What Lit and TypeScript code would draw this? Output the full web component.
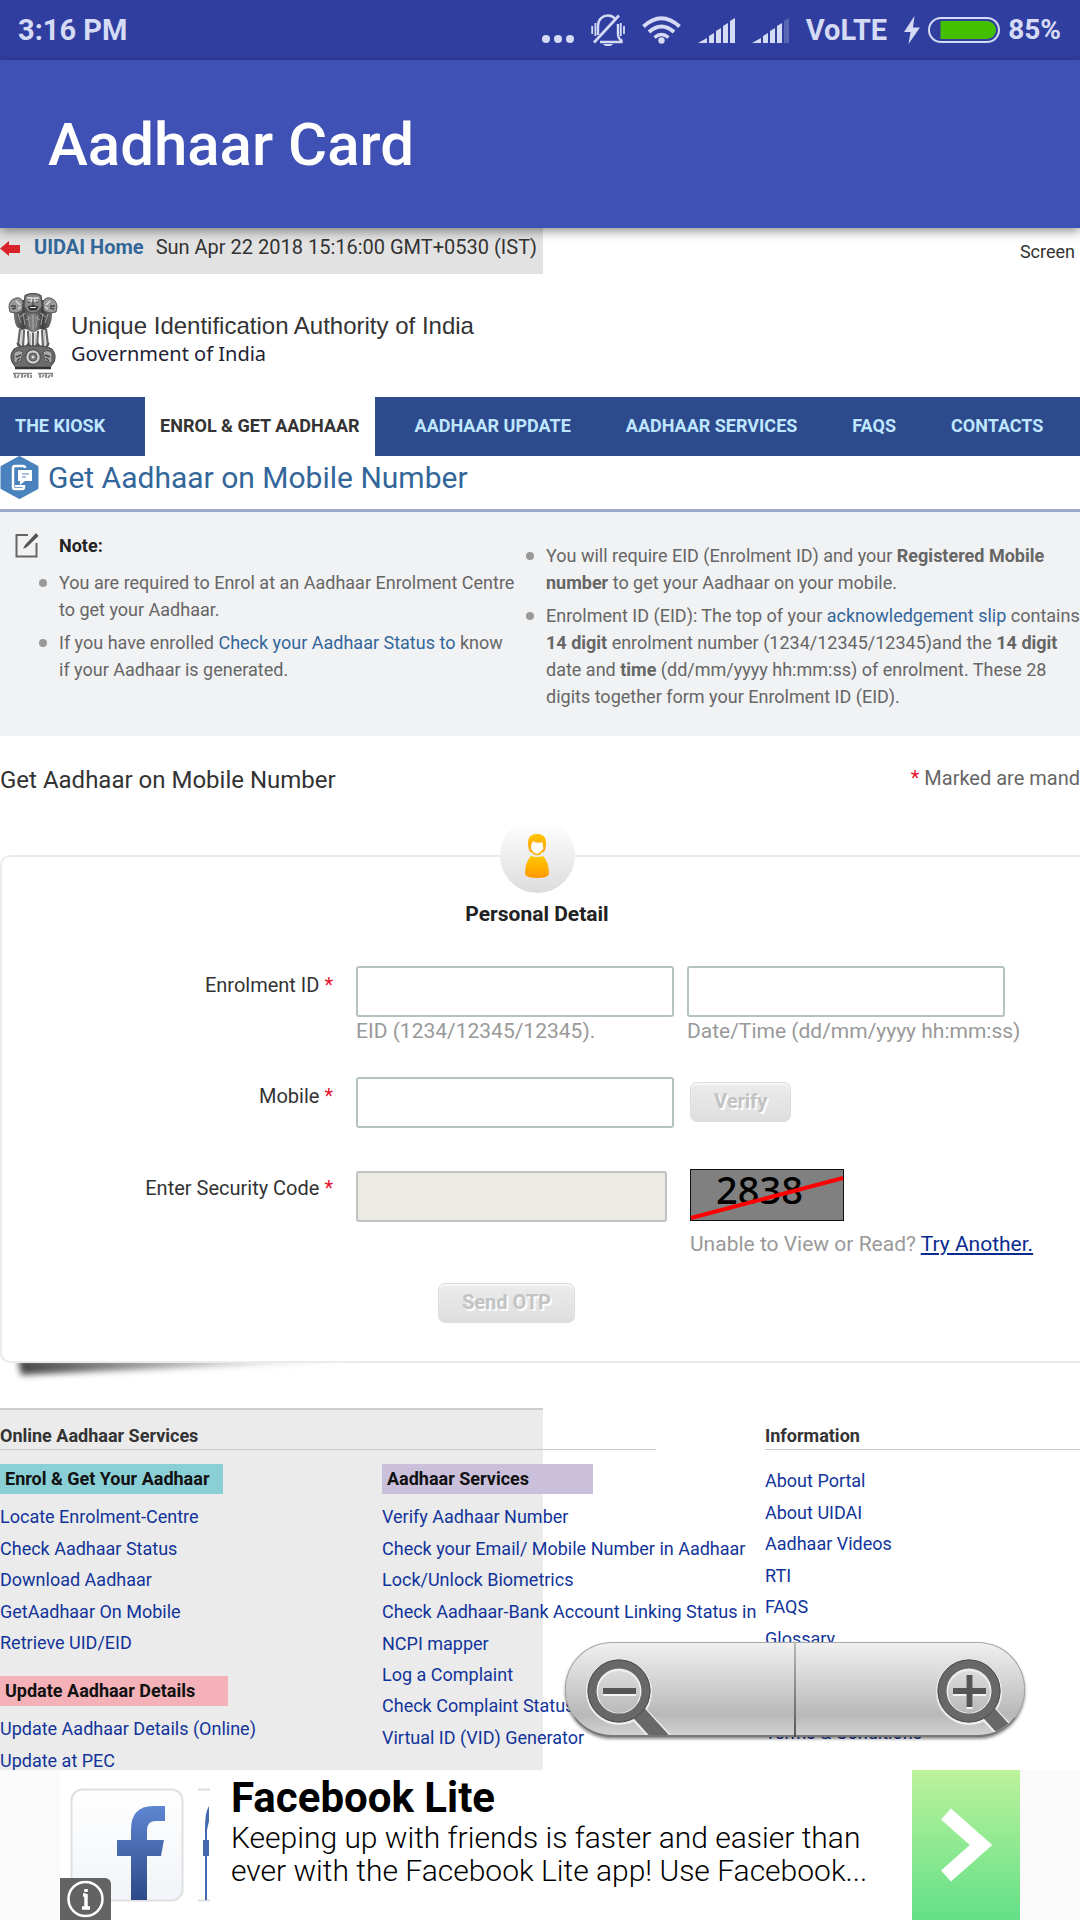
import { LitElement, html, svg, css } from "lit";
import { customElement } from "lit/decorators.js";

const bars = (lit: number) => svg`
  ${[0, 1, 2, 3, 4].map((i) => {
    const x = [0, 11, 18, 25, 32][i];
    const w = i === 0 ? 9 : 5;
    const top = [20, 15, 10, 5, 0][i];
    return svg`<path opacity=${i < lit ? 1 : 0.25} d="M${x} ${i === 0 ? 25 : top + 3} L${x + w} ${top} V25 H${x} Z" />`;
  })}`;

@customElement("status-bar")
class StatusBar extends LitElement {
  static styles = css`
    :host { display: flex; align-items: center; justify-content: space-between; height: 60px; padding: 0 19px 0 18px;
      background: #303f9f; color: #d5daf5; font: 700 29px/60px Roboto, sans-serif; }
    .icons { display: flex; align-items: center; gap: 17px; }
    .power { display: flex; align-items: center; gap: 8px; }
    .level { font-size: 28px; }
    svg { display: block; fill: currentColor; }
  `;
  render() {
    return html`
      <span>3:16 PM</span>
      <div class="icons">
        <svg width="32" height="32" viewBox="0 0 32 32"><circle cx="4" cy="25" r="4" /><circle cx="16" cy="25" r="4" /><circle cx="28" cy="25" r="4" /></svg>
        <svg width="34" height="32" viewBox="0 0 34 32">
          <path d="M7 21V12C7 5 12 1.500 17 1.500C20 1.500 22 2.500 24 4.500M27 10V20C27 23 28 25 30.500 26.500V28H9" fill="none" stroke="currentColor" stroke-width="2.400" />
          <path d="M3 28.500L28 1.500" stroke="currentColor" stroke-width="2.600" />
          <path d="M12 30H22Q21 32 17 32Q13 32 12 30Z" />
          <path d="M1.200 12V20M4.400 9V22M29.800 9V22M33 12V20" stroke="currentColor" stroke-width="1.800" />
        </svg>
        <svg width="39" height="28" viewBox="0 0 39 28">
          <g fill="none" stroke="currentColor" stroke-width="4"><path d="M1.500 10.500Q19.500 -6 37.500 10.500" /><path d="M7 16Q19.500 5 32 16" /><path d="M12.500 21.500Q19.500 15.500 26.500 21.500" stroke-width="3.500" /></g>
          <circle cx="19.500" cy="24.500" r="3.200" />
        </svg>
        <svg width="37" height="25" viewBox="0 0 37 25">${bars(5)}</svg>
        <svg width="37" height="25" viewBox="0 0 37 25">${bars(4)}</svg>
        <span>VoLTE</span>
        <div class="power">
          <svg width="16" height="28" viewBox="0 0 16 28"><path d="M10.500 0L0 16H6.500L4.500 28L16 11.500H9Z" /></svg>
          <svg width="72" height="26" viewBox="0 0 72 26"><rect x="1" y="1" width="70" height="24" rx="12" fill="none" stroke="currentColor" stroke-width="2" /><path d="M12.500 4H59A9 9 0 0 1 59 22H12.500Z" fill="#45c000" /></svg>
          <span class="level">85%</span>
        </div>
      </div>`;
  }
}

@customElement("national-emblem")
class NationalEmblem extends LitElement {
  static styles = css`:host, svg { display: block; }`;
  render() {
    return html`<svg width="50" height="87" viewBox="0 0 50 87" role="img" aria-label="State Emblem of India">
      <defs>
        <linearGradient id="stone" x1="0" x2="1"><stop offset="0" stop-color="#777" /><stop offset=".25" stop-color="#444" /><stop offset=".5" stop-color="#888" /><stop offset=".75" stop-color="#3c3c3c" /><stop offset="1" stop-color="#777" /></linearGradient>
      </defs>
      <path d="M6 14Q5 28 9 34L14 37L18 36L25 40L32 36L36 37L41 34Q45 27 44 14L36 7H14Z" fill="url(#stone)" />
      <path d="M1 14Q1 7 8 5Q14 4 15 10L14 18L8 20L2 19Z" fill="#999" stroke="#555" />
      <path d="M49 14Q49 7 42 5Q36 4 35 10L36 18L42 20L48 19Z" fill="#999" stroke="#555" />
      <path d="M3 13H8M4 16L8 15M42 13H47M42 15L46 16" stroke="#444" stroke-width="1.500" />
      <path d="M8 8L12 12M38 12L42 8M10 16L13 14M37 14L40 16" stroke="#ddd" stroke-width="1.500" />
      <path d="M17 3Q25 -2 33 3L34 13Q31 20 25 20Q19 20 16 13Z" fill="#888" stroke="#555" stroke-width="1.500" />
      <path d="M19 5H24V8H20M31 5H26V8H30" stroke="#e4e4e4" fill="none" stroke-width="1.500" />
      <path d="M25 6V12M20 9H22M28 9H30M20 14Q25 11 30 14L28 17H22Z" fill="#333" stroke="#333" />
      <path d="M22 14.500H28" stroke="#eee" />
      <path d="M10 21L13 30M15 20L17 32M20 22L22 34M25 22V36M30 22L28 34M35 20L33 32M40 21L37 30M12 24L18 20M38 24L32 20M18 27L23 24M32 27L27 24" stroke="#aaa" fill="none" stroke-width=".900" />
      <path d="M12 36L10 53M16 37L15 54M20 38L21 54M25 40V54M30 38L29 54M34 37L35 54M38 36L40 53" stroke="#666" stroke-width="2.200" />
      <path d="M14 37L13 52M22.500 40V52M27.500 40V52M36 37L37 52" stroke="#c4c4c4" stroke-width="1.500" />
      <path d="M9 50L13 54H18L20 51L23 54H27L30 51L32 54H38L41 50" fill="none" stroke="#555" stroke-width="2" />
      <path d="M6 56Q12 52 25 53Q38 52 44 56Q49 62 46 69Q43 73 42 75H8Q6 72 4 69Q1 62 6 56Z" fill="#6c6c6c" stroke="#444" />
      <path d="M6 60Q10 56 15 59L13 68L6 70ZM44 60Q40 56 35 59L37 68L44 70Z" fill="#aaa" stroke="#555" />
      <path d="M8 64L13 62M37 62L42 64M9 68L12 65M41 68L38 65" stroke="#444" stroke-width="1.500" />
      <circle cx="25" cy="64" r="7.500" fill="#ccc" stroke="#555" stroke-width="1.500" />
      <circle cx="25" cy="64" r="4" fill="#777" stroke="#555" /><circle cx="25" cy="64" r="1.500" fill="#ddd" />
      <path d="M7 75H43" stroke="#333" stroke-width="2.500" />
      <path d="M5 80.500H24M30 80.500H45" stroke="#888" stroke-width="1.500" />
      <path d="M7 81V85M11 82L9 85M14 81V85M18 82L16 84M20 81V85M23 82V85M32 81V85M36 82L34 84M38 81V85M42 82L40 85M44 81V84" stroke="#888" stroke-width="1.800" />
    </svg>`;
  }
}

@customElement("zoom-controls")
class ZoomControls extends LitElement {
  static styles = css`
    :host { display: flex; gap: 2px; width: 460px; height: 95px; border-radius: 47px; overflow: hidden;
      background: linear-gradient(#bbb, #555); box-shadow: 0 2px 3px rgba(0, 0, 0, 0.45); }
    button { display: flex; padding: 0; border: 1px solid #aaa; border-bottom: 2px solid #777; overflow: hidden;
      background: linear-gradient(#f0f0f0 0%, #d8d8d8 35%, #b8b8b8 78%, #d2d2d2 100%); }
    .out { flex: 1; border-radius: 47px 0 0 47px; padding-left: 20px; border-right: 0; }
    .in { flex: 0 0 229px; border-radius: 0 47px 47px 0; padding-right: 4px; justify-content: flex-end; border-left: 0; }
    svg { display: block; flex: none; }
  `;
  private glass(plus: boolean) {
    return html`<svg width="84" height="92" viewBox="0 0 84 92">
      <g fill="none">
        <path d="M52 70L82 102" stroke="#f2f2f2" stroke-width="18" />
        <circle cx="33" cy="49" r="27" stroke="#eee" stroke-width="12" />
        <path d="M51 68L80 100" stroke="#686868" stroke-width="15" />
        <circle cx="33" cy="48" r="27" stroke="#686868" stroke-width="9" />
        <circle cx="33" cy="48" r="31" stroke="#505050" stroke-width="1" />
        <path d=${plus ? "M17 50H50M33.500 34V66" : "M17 50H50"} stroke="#f4f4f4" stroke-width="6" />
        <path d=${plus ? "M17 48H50M33.500 32V64" : "M17 48H50"} stroke="#555" stroke-width="6" />
      </g>
    </svg>`;
  }
  render() {
    return html`<button class="out" aria-label="Zoom out">${this.glass(false)}</button><button class="in" aria-label="Zoom in">${this.glass(true)}</button>`;
  }
}

@customElement("ad-banner")
class AdBanner extends LitElement {
  static styles = css`
    :host { display: flex; flex: none; height: 150px; justify-content: center; background: #fafafa; font-family: Roboto, sans-serif; color: #000; }
    .inner { position: relative; display: flex; flex: 0 1 960px; background: #fff; }
    .art { display: flex; flex: none; gap: 14px; width: 171px; box-sizing: border-box; padding: 18px 0 0 10px; }
    .copy { flex: 1; padding-top: 5px; white-space: nowrap; }
    h2 { margin: 0; font-size: 42px; line-height: 46px; font-weight: 700; }
    p { margin: 0; font-family: "Roboto Light", Roboto, sans-serif; font-size: 30px; line-height: 33px; font-weight: 300; }
    .go { display: flex; align-items: center; justify-content: center; flex: none; width: 108px; background: linear-gradient(#bcf29c, #63e087); }
    .info { position: absolute; left: 0; bottom: 0; width: 51px; height: 42px; padding: 0; border: 0; border-top-right-radius: 6px; background: #636363; }
    svg { display: block; }
  `;
  render() {
    return html`<div class="inner">
      <div class="art">
        <svg width="114" height="114" viewBox="0 0 114 114" role="img" aria-label="Facebook">
          <defs>
            <linearGradient id="paper" x2="0" y2="1"><stop stop-color="#fff" /><stop offset="1" stop-color="#f1f4f8" /></linearGradient>
            <linearGradient id="blue" x2="0" y2="1"><stop stop-color="#5f86d2" /><stop offset="1" stop-color="#2c4987" /></linearGradient>
          </defs>
          <rect x="1.500" y="1.500" width="111" height="111" rx="11" fill="url(#paper)" stroke="#e0e0e0" stroke-width="2" />
          <path d="M61 112V68H47V52H61V42Q61 18 83 18H95V33H86Q77 33 77 42V52H94L91 68H77V112Z" fill="url(#blue)" />
        </svg>
        <svg width="12" height="114" viewBox="0 0 12 114">
          <path d="M0 1.500H12M0 112.500H12" stroke="#ddd" stroke-width="2" />
          <path d="M7 112V68H5V52H7V40Q7 24 11 18V33L9 42V52H11V68H9V112Z" fill="#4468b0" />
        </svg>
      </div>
      <div class="copy"><h2>Facebook Lite</h2><p>Keeping up with friends is faster and easier than<br />ever with the Facebook Lite app! Use Facebook...</p></div>
      <a class="go" href="#" aria-label="Open"><svg width="52" height="74" viewBox="0 0 52 74"><path d="M6 6L41 37L6 68" fill="none" stroke="#fff" stroke-width="15" /></svg></a>
      <button class="info" aria-label="Ad information"><svg width="51" height="42" viewBox="0 0 51 42"><circle cx="25.500" cy="21" r="17" fill="none" stroke="#fff" stroke-width="2.500" /><path d="M26 16V30M26 11V14M23 17H26M22 30H30" stroke="#fff" stroke-width="3.500" /></svg></button>
    </div>`;
  }
}

const NAV = ["The Kiosk", "Enrol & Get Aadhaar", "Aadhaar Update", "Aadhaar Services", "FAQS", "Contacts"];
const ENROL = ["Locate Enrolment-Centre", "Check Aadhaar Status", "Download Aadhaar", "GetAadhaar On Mobile", "Retrieve UID/EID"];
const UPDATE = ["Update Aadhaar Details (Online)", "Update at PEC"];
const INFO = ["About Portal", "About UIDAI", "Aadhaar Videos", "RTI", "FAQS", "Glossary"];
const links = (items: string[]) => items.map((t) => html`<li><a href="#">${t}</a></li>`);

@customElement("app-root")
class AppRoot extends LitElement {
  static styles = css`
    :host { display: flex; flex-direction: column; height: 100vh; overflow: hidden; background: #fff; color: #333; font: 400 18px/27px Roboto, sans-serif; }
    h1, h2, h3, ul, p { margin: 0; padding: 0; font-size: inherit; font-weight: inherit; }
    ul { list-style: none; }
    a { color: #336699; text-decoration: none; }
    svg { display: block; flex: none; }
    .appbar { position: relative; z-index: 1; flex: none; height: 168px; padding: 0 48px; background: #3f51b5; box-shadow: 0 3px 10px rgba(0, 0, 0, 0.45); color: #fff; font-size: 60px; font-weight: 500; line-height: 170px; }
    .page { position: relative; flex: 1; min-height: 0; overflow: hidden; }
    .top { display: flex; height: 46px; background: linear-gradient(#e2e2e2, #e2e2e2) 0 0 / 543px 100% no-repeat; font-size: 20px; line-height: 38px; white-space: nowrap; }
    .top svg { margin-top: 12px; }
    .home { margin: 0 12px 0 14px; font-weight: 700; }
    .screen { margin-left: auto; padding-right: 5px; font-size: 18px; line-height: 48px; }
    .brand { display: flex; gap: 13px; height: 104px; padding: 19px 8px 0; white-space: nowrap; }
    .names { padding-top: 18px; }
    .authority { font: 24px/30px "Liberation Sans", sans-serif; }
    .gov { font: 20px/26px "Noto Sans", sans-serif; color: #223; }
    nav { display: flex; gap: 25px; background: #2d4a8d; font-weight: 700; line-height: 57px; white-space: nowrap; text-transform: uppercase; }
    nav a { padding: 0 15px 2px; color: #bfe6ff; }
    nav .active { background: #fff; color: #333; }
    .heading { display: flex; gap: 9px; height: 53px; border-bottom: 3px solid #9dabcb; color: #336699; font-size: 30px; line-height: 44px; white-space: nowrap; }
    .notes { display: grid; grid-template-columns: 526px 1fr; padding-bottom: 26px; background: #f1f2f4; color: #666; white-space: nowrap; }
    .left { padding-top: 20px; }
    .left ul { padding: 10px 0 0 39px; }
    .right { padding-top: 30px; }
    .note { display: flex; gap: 20px; padding-left: 15px; color: #222; font-weight: 700; }
    .notes ul { display: grid; gap: 6px; }
    .notes li { display: flex; gap: 12px; }
    .notes li::before { content: ""; flex: none; width: 8px; height: 8px; margin-top: 10px; border-radius: 50%; background: #999; }
    .formhead { display: flex; justify-content: space-between; padding: 26px 0 57px; white-space: nowrap; font-size: 24px; line-height: 36px; }
    .marked { color: #666; font-size: 20px; line-height: 32px; }
    .req { color: #e8112d; }
    .card { border: 2px solid #ebebeb; border-right: 0; border-radius: 10px 0 0 10px; padding: 0 8px 38px 0; background: #fff; }
    .cardwrap { position: relative; }
    .curl { position: absolute; left: 14px; top: 100%; }
    .avatar { display: grid; place-items: center; width: 75px; height: 75px; margin: -39px auto 7px; border-radius: 50%; background: linear-gradient(#fff 5%, #dcdcdc); }
    .card h3 { color: #222; font-size: 21px; font-weight: 700; line-height: 28px; text-align: center; }
    .row { display: grid; grid-template-columns: 341px 318px 1fr; column-gap: 13px; align-items: start; font-size: 20px; line-height: 38px; white-space: nowrap; }
    .first { padding-top: 38px; }
    .second { padding-top: 32px; }
    .third { padding-top: 41px; }
    .row > label { padding-right: 10px; text-align: right; }
    input { display: block; box-sizing: border-box; width: 318px; height: 51px; border: 2px solid #b4c2c2; border-radius: 3px; background: #fff; font: 20px Roboto, sans-serif; }
    .code { width: 311px; margin-top: 2px; background: #ebebe4; border-color: #bfc4c0; }
    .hint { color: #999; font-size: 21px; line-height: 28px; }
    .aside { padding-left: 3px; }
    .aside .hint { padding-top: 9px; }
    .try { color: #0b2b8f; text-decoration: underline; }
    .btn { display: block; box-sizing: border-box; height: 40px; padding: 0 23px 2px; border: 1px solid #dcdcdc; border-radius: 7px; background: linear-gradient(#ececec, #dedede); box-shadow: inset 0 2px 1px #f8f8f8; color: #c3c3c3; font: 700 20px/36px Roboto, sans-serif; text-shadow: 2px 2px 1px #fff; }
    .verify { margin-top: 5px; }
    .send { margin: 25px 0 0 436px; }
    footer { display: grid; grid-template-columns: 765px 1fr; min-height: 400px; margin-top: 45px; background: linear-gradient(#ccc 0 2px, #ebebeb 2px) 0 0 / 543px 100% no-repeat; white-space: nowrap; padding-top: 15px; }
    footer h2 { line-height: 26px; font-weight: 700; border-bottom: 1px solid #c9c9c9; }
    .services h2 { width: 656px; }
    .cols { display: grid; grid-template-columns: 382px 383px; padding-top: 14px; }
    footer h3 { width: 218px; padding-left: 5px; margin-bottom: 7px; color: #111; font-weight: 700; line-height: 30px; }
    .teal { background: #8acfd5; }
    .purple { background: #cbc0db; }
    .pink { background: #f4b1b8; margin-top: 17px; }
    .cols .purple { width: 206px; }
    .cols .pink { width: 223px; }
    footer ul { display: grid; grid-auto-rows: 32px 31px; line-height: 32px; }
    footer a { color: #12349a; }
    .two { grid-row: span 2; }
    .info ul { padding-top: 15px; }
    .terms { grid-row: 9; }
    .zoom { position: absolute; right: 55px; bottom: 33px; }
  `;
  render() {
    return html`
      <status-bar></status-bar>
      <h1 class="appbar">Aadhaar Card</h1>
      <main class="page">
        <div class="top">
          <svg width="20" height="17" viewBox="0 0 20 17"><path d="M0 8.500L9 1V5H20V13H9V16Z" fill="#d8232a" /></svg>
          <a class="home" href="#">UIDAI Home</a><span>Sun Apr 22 2018 15:16:00 GMT+0530 (IST)</span><span class="screen">Screen</span>
        </div>
        <header class="brand"><national-emblem></national-emblem><div class="names"><div class="authority">Unique Identification Authority of India</div><div class="gov">Government of India</div></div></header>
        <nav>${NAV.map((t, i) => html`<a href="#" class=${i === 1 ? "active" : ""}>${t}</a>`)}</nav>
        <div class="heading">
          <svg width="39" height="43" viewBox="0 0 39 43"><path d="M19.500 1.500L37 11V32L19.500 41.500L2 32V11Z" fill="#4a82bd" stroke="#4a82bd" stroke-width="3" stroke-linejoin="round" /><path d="M24 29V31Q24 33 22 33H15Q13 33 13 31V12Q13 10 15 10H23Q25 10 25 12" fill="none" stroke="#fff" stroke-width="2.500" /><path d="M18 14H32V25H25L20 29V25H18Z" fill="#fff" /><path d="M22 18H29M22 21H26" stroke="#8ab0d8" stroke-width="1.500" /><path d="M15 30H23" stroke="#fff" stroke-width="2" /></svg>
          <h2>Get Aadhaar on Mobile Number</h2>
        </div>
        <section class="notes">
          <div class="left">
            <div class="note"><svg width="24" height="26" viewBox="0 0 24 26"><path d="M13 3H1.500V24.500H21.500V11" fill="none" stroke="#666" stroke-width="2" /><path d="M21 1L23.500 4L12 15L8 17L10 13Z" fill="#555" /></svg>Note:</div>
            <ul>
              <li><span>You are required to Enrol at an Aadhaar Enrolment Centre<br />to get your Aadhaar.</span></li>
              <li><span>If you have enrolled <a href="#">Check your Aadhaar Status to</a> know<br />if your Aadhaar is generated.</span></li>
            </ul>
          </div>
          <ul class="right">
            <li><span>You will require EID (Enrolment ID) and your <b>Registered Mobile<br />number</b> to get your Aadhaar on your mobile.</span></li>
            <li><span>Enrolment ID (EID): The top of your <a href="#">acknowledgement slip</a> contains<br /><b>14 digit</b> enrolment number (1234/12345/12345)and the <b>14 digit</b><br />date and <b>time</b> (dd/mm/yyyy hh:mm:ss) of enrolment. These 28<br />digits together form your Enrolment ID (EID).</span></li>
          </ul>
        </section>
        <div class="formhead"><h2>Get Aadhaar on Mobile Number</h2><span class="marked"><span class="req">*</span> Marked are mand</span></div>
        <div class="cardwrap">
          <form class="card">
            <div class="avatar">
              <svg width="26" height="46" viewBox="0 0 26 46">
                <defs><linearGradient id="gold" x2="0" y2="1"><stop stop-color="#ffc800" /><stop offset="1" stop-color="#ff9800" /></linearGradient></defs>
                <path d="M5 17Q1 1 13 1Q25 1 21 17L19 20Q20 12 18 9Q14 11 9 8Q6 12 7 20Z" fill="url(#gold)" /><path d="M8 10Q13 12 18 10Q20 20 13 21.500Q6 20 8 10Z" fill="#fff" /><path d="M7 17Q13 26 19 17" fill="none" stroke="#ffb000" stroke-width="1.500" />
                <path d="M7 23Q13 25 19 23Q25 29 25 41Q24 45 13 45Q2 45 1 41Q1 29 7 23Z" fill="url(#gold)" />
              </svg>
            </div>
            <h3>Personal Detail</h3>
            <div class="row first">
              <label for="eid">Enrolment ID <span class="req">*</span></label>
              <div><input id="eid" type="text" /><div class="hint">EID (1234/12345/12345).</div></div>
              <div><input id="stamp" type="text" aria-labelledby="stamp-hint" /><div class="hint" id="stamp-hint">Date/Time (dd/mm/yyyy hh:mm:ss)</div></div>
            </div>
            <div class="row second">
              <label for="mobile">Mobile <span class="req">*</span></label>
              <input id="mobile" type="tel" />
              <div class="aside"><button class="btn verify" type="button" disabled>Verify</button></div>
            </div>
            <div class="row third">
              <label for="code">Enter Security Code <span class="req">*</span></label>
              <input id="code" class="code" type="text" disabled />
              <div class="aside">
                <svg width="154" height="52" viewBox="0 0 154 52"><rect x=".500" y=".500" width="153" height="51" fill="#808080" stroke="#111" /><text x="26" y="35" font-family="Noto Sans, sans-serif" font-size="38" font-weight="500">2838</text><path d="M1 49L153 9" stroke="#f00" stroke-width="4" /></svg>
                <div class="hint">Unable to View or Read? <a class="try" href="#">Try Another.</a></div>
              </div>
            </div>
            <button class="btn send" type="button" disabled>Send OTP</button>
          </form>
          <svg class="curl" width="360" height="28" viewBox="0 0 360 28">
            <defs>
              <filter id="soft" x="-10%" y="-60%" width="120%" height="220%"><feGaussianBlur stdDeviation="3" /></filter>
              <linearGradient id="shade"><stop stop-color="#444" /><stop offset="1" stop-color="#999" stop-opacity="0" /></linearGradient>
            </defs>
            <path d="M4 -4H358L7 12Z" fill="url(#shade)" filter="url(#soft)" />
          </svg>
        </div>
        <footer>
          <div class="services">
            <h2>Online Aadhaar Services</h2>
            <div class="cols">
              <div><h3 class="teal">Enrol &amp; Get Your Aadhaar</h3><ul>${links(ENROL)}</ul><h3 class="pink">Update Aadhaar Details</h3><ul>${links(UPDATE)}</ul></div>
              <div><h3 class="purple">Aadhaar Services</h3><ul>
                ${links(["Verify Aadhaar Number", "Check your Email/ Mobile Number in Aadhaar", "Lock/Unlock Biometrics"])}
                <li class="two"><a href="#">Check Aadhaar-Bank Account Linking Status in<br />NCPI mapper</a></li>
                ${links(["Log a Complaint", "Check Complaint Status", "Virtual ID (VID) Generator"])}
              </ul></div>
            </div>
          </div>
          <div class="info"><h2>Information</h2><ul>${links(INFO)}<li class="terms"><a href="#">Terms &amp; Conditions</a></li><li><a href="#">Privacy Policy</a></li></ul></div>
        </footer>
        <zoom-controls class="zoom"></zoom-controls>
      </main>
      <ad-banner></ad-banner>`;
  }
}
